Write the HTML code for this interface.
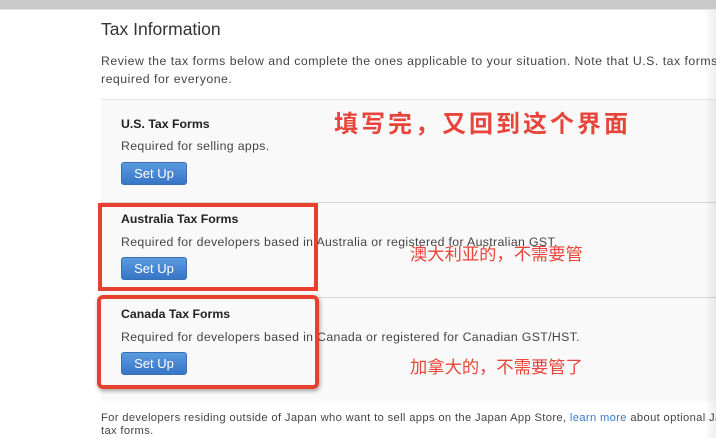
<!DOCTYPE html><html><head><meta charset="utf-8"><style>
body{margin:0;width:716px;height:438px;overflow:hidden;background:#fff;font-family:"Liberation Sans","Noto Sans CJK SC",sans-serif;color:#333;position:relative}
.a{position:absolute;white-space:nowrap}
.top{position:absolute;left:0;top:0;width:716px;height:9px;background:#c9c9c9;border-bottom:1px solid #e4e4e4}
.panel{position:absolute;left:101px;top:99px;width:620px;height:301px;background:#f9f9f9;border-top:1px solid #e6e6e6}
.sep{position:absolute;left:101px;width:620px;height:1px;background:#d4d4d4}
.d{font-size:12.3px;color:#444;letter-spacing:0.35px}
.btn{position:absolute;left:121px;width:66px;height:23px;border-radius:3px;background:linear-gradient(#5a9be0,#3875c6);border:1px solid #3a6fb5;box-sizing:border-box;color:#fff;font-size:13px;text-align:center;line-height:22px}
.red{color:#e8453a;font-family:"Noto Sans CJK SC",sans-serif}
.box{position:absolute;border:4px solid #e8402f;box-sizing:border-box}
.shade{position:absolute;right:0;top:10px;width:12px;height:428px;background:linear-gradient(90deg,rgba(0,0,0,0),rgba(0,0,0,0.07))}
</style></head><body>
<div class="top"></div>
<div class="a" style="left:101px;top:19px;font-size:17.5px;color:#333">Tax Information</div>
<div class="a" style="left:101px;top:52px;font-size:12.3px;line-height:18px;color:#444;letter-spacing:0.5px">Review the tax forms below and complete the ones applicable to your situation. Note that U.S. tax forms are<br>required for everyone.</div>
<div class="panel"></div>
<div class="sep" style="top:202px"></div>
<div class="sep" style="top:297px"></div>
<div class="a" style="left:121px;top:117px;font-size:12.3px;font-weight:bold;color:#222">U.S. Tax Forms</div>
<div class="a d" style="left:121px;top:139px">Required for selling apps.</div>
<div class="btn" style="top:162px">Set Up</div>
<div class="a" style="left:121px;top:212px;font-size:12.3px;font-weight:bold;color:#222">Australia Tax Forms</div>
<div class="a d" style="left:121px;top:235px">Required for developers based in Australia or registered for Australian GST.</div>
<div class="btn" style="top:257px">Set Up</div>
<div class="a" style="left:121px;top:307px;font-size:12.3px;font-weight:bold;color:#222">Canada Tax Forms</div>
<div class="a d" style="left:121px;top:330px">Required for developers based in Canada or registered for Canadian GST/HST.</div>
<div class="btn" style="top:352px">Set Up</div>
<div class="a" style="left:101px;top:412px;font-size:11.2px;line-height:13px;color:#444;letter-spacing:0.35px">For developers residing outside of Japan who want to sell apps on the Japan App Store, <span style="color:#3a7bc8">learn more</span> about optional Japan<br>tax forms.</div>
<div class="box" style="left:98px;top:203px;width:220px;height:88px"></div>
<div class="box" style="left:97px;top:295px;width:222px;height:94px;border-radius:6px;box-shadow:1px 2px 4px rgba(0,0,0,.35)"></div>
<div class="a red" style="left:334px;top:104px;font-size:24px;font-weight:bold;letter-spacing:3px">填写完，又回到这个界面</div>
<div class="a red" style="left:410px;top:240px;font-size:17.3px">澳大利亚的，不需要管</div>
<div class="a red" style="left:410px;top:353px;font-size:17.3px">加拿大的，不需要管了</div>
<div class="shade"></div>
</body></html>
